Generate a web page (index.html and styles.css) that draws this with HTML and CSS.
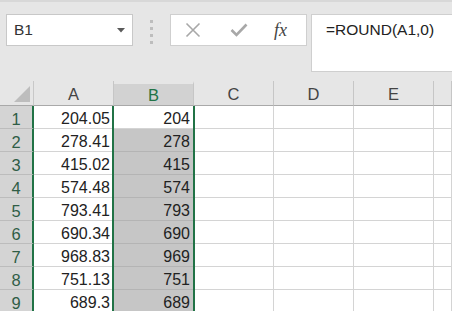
FILE: index.html
```html
<!DOCTYPE html>
<html>
<head>
<meta charset="utf-8">
<link rel="stylesheet" href="styles.css">
</head>
<body>
<div class="app">
  <div class="toolbar">
    <div class="namebox">
      <span class="ref">B1</span>
      <svg class="caret" width="8" height="5" viewBox="0 0 8 5"><path d="M0 0 H8 L4 4.5 Z" fill="#5a5a5a"/></svg>
    </div>
    <div class="grip"><i></i><i></i><i></i><i></i></div>
    <div class="fbuttons">
      <svg class="btn-x" width="16" height="16" viewBox="0 0 16 16"><path d="M1.5 1.5 L14.5 14.5 M14.5 1.5 L1.5 14.5" stroke="#a8a8a8" stroke-width="1.6" fill="none"/></svg>
      <svg class="btn-ok" width="18" height="14" viewBox="0 0 18 14"><path d="M1.5 7 L6.5 12 L16.5 1.5" stroke="#a8a8a8" stroke-width="2.6" fill="none"/></svg>
      <span class="fx">fx</span>
    </div>
    <div class="formula">=ROUND(A1,0)</div>
  </div>
  <div class="sheet">
    <div class="grid">
      <div class="corner"><svg width="16" height="16" viewBox="0 0 16 16"><path d="M16 0 V16 H0 Z" fill="#bdbdbd"/></svg></div>
      <div class="colh">A</div>
      <div class="colh sel">B</div>
      <div class="colh">C</div>
      <div class="colh">D</div>
      <div class="colh">E</div>
      <div class="colh"></div>

      <div class="rowh">1</div><div class="cell">204.05</div><div class="cell active">204</div><div class="cell"></div><div class="cell"></div><div class="cell"></div><div class="cell"></div>
      <div class="rowh">2</div><div class="cell">278.41</div><div class="cell hl">278</div><div class="cell"></div><div class="cell"></div><div class="cell"></div><div class="cell"></div>
      <div class="rowh">3</div><div class="cell">415.02</div><div class="cell hl">415</div><div class="cell"></div><div class="cell"></div><div class="cell"></div><div class="cell"></div>
      <div class="rowh">4</div><div class="cell">574.48</div><div class="cell hl">574</div><div class="cell"></div><div class="cell"></div><div class="cell"></div><div class="cell"></div>
      <div class="rowh">5</div><div class="cell">793.41</div><div class="cell hl">793</div><div class="cell"></div><div class="cell"></div><div class="cell"></div><div class="cell"></div>
      <div class="rowh">6</div><div class="cell">690.34</div><div class="cell hl">690</div><div class="cell"></div><div class="cell"></div><div class="cell"></div><div class="cell"></div>
      <div class="rowh">7</div><div class="cell">968.83</div><div class="cell hl">969</div><div class="cell"></div><div class="cell"></div><div class="cell"></div><div class="cell"></div>
      <div class="rowh">8</div><div class="cell">751.13</div><div class="cell hl">751</div><div class="cell"></div><div class="cell"></div><div class="cell"></div><div class="cell"></div>
      <div class="rowh">9</div><div class="cell">689.3</div><div class="cell hl">689</div><div class="cell"></div><div class="cell"></div><div class="cell"></div><div class="cell"></div>
    </div>
    <div class="selection"></div>
  </div>
</div>
</body>
</html>
```

FILE: styles.css
```css
* { box-sizing: border-box; }
html, body { margin: 0; padding: 0; }
body { background: #e6e6e6; font-family: "Liberation Sans", Arial, sans-serif; }

.app {
  width: 452px;
  height: 311px;
  overflow: hidden;
  display: flex;
  flex-direction: column;
  background: #e6e6e6;
  border-top: 2px solid #d8d8d8;
}

.toolbar {
  height: 79px;
  flex: none;
  display: flex;
  align-items: flex-start;
  padding: 12px 0 0 6px;
}

.namebox {
  width: 127px;
  height: 32px;
  background: #fff;
  border: 1px solid #c8c8c8;
  display: flex;
  align-items: center;
  justify-content: space-between;
  padding: 0 7px 0 7px;
  font-size: 15.5px;
  color: #333;
}
.namebox .caret { margin-top: 1px; }

.grip {
  width: 37px;
  display: flex;
  flex-direction: column;
  align-items: center;
  gap: 4px;
  padding-top: 6px;
}
.grip i {
  display: block;
  width: 3px;
  height: 3px;
  background: #bdbdbd;
}

.fbuttons {
  width: 137px;
  height: 32px;
  background: #fff;
  border: 1px solid #cfcfcf;
  display: flex;
  align-items: center;
  padding: 0 0 0 14px;
}
.btn-x { margin-right: 29px; }
.btn-ok { margin-right: 26px; }
.fx {
  font-family: "Liberation Serif", "Times New Roman", serif;
  font-style: italic;
  font-size: 18px;
  color: #444;
}

.formula {
  margin-left: 4px;
  flex: 1;
  height: 58px;
  background: #fff;
  border: 1px solid #cfcfcf;
  border-right: none;
  padding: 6px 0 0 14px;
  font-size: 15.5px;
  color: #222;
}

.sheet {
  position: relative;
  flex: 1;
  background: #fff;
}

.grid {
  display: grid;
  grid-template-columns: 34px 80px 80px 80px 80px 80px 1fr;
  grid-template-rows: 25px repeat(9, 23px);
}

.corner {
  background: #e6e6e6;
  border-right: 1px solid #c8c8c8;
  border-bottom: 1px solid #a9a9a9;
  display: flex;
  align-items: flex-end;
  justify-content: flex-end;
  padding: 0 3px 3px 0;
}

.colh {
  background: #e6e6e6;
  border-right: 1px solid #c6c6c6;
  border-bottom: 1px solid #a9a9a9;
  text-align: center;
  font-size: 16.5px;
  line-height: 24px;
  color: #444;
  padding-top: 1px;
}
.colh.sel {
  background: #d2d2d2;
  color: #217346;
  border-top: 3px solid #e6e6e6;
  line-height: 21px;
}

.rowh {
  background: #d4d4d4;
  border-right: 2px solid #217346;
  border-bottom: 1px solid #bcbcbc;
  text-align: center;
  font-size: 16.5px;
  line-height: 22px;
  padding-top: 2px;
  color: #2f5d46;
}

.cell {
  border-right: 1px solid #d4d4d4;
  border-bottom: 1px solid #d4d4d4;
  text-align: right;
  font-size: 16px;
  line-height: 22px;
  padding: 2px 3px 0 0;
  color: #222;
  white-space: nowrap;
}
.cell.hl { background: #c6c6c6; border-bottom-color: #b4b4b4; }
.cell.active { background: #fff; }

.selection {
  position: absolute;
  left: 112px;
  width: 83px;
  top: 25px;
  bottom: 0;
  border-left: 2px solid #217346;
  border-right: 2px solid #217346;
  pointer-events: none;
}
```
